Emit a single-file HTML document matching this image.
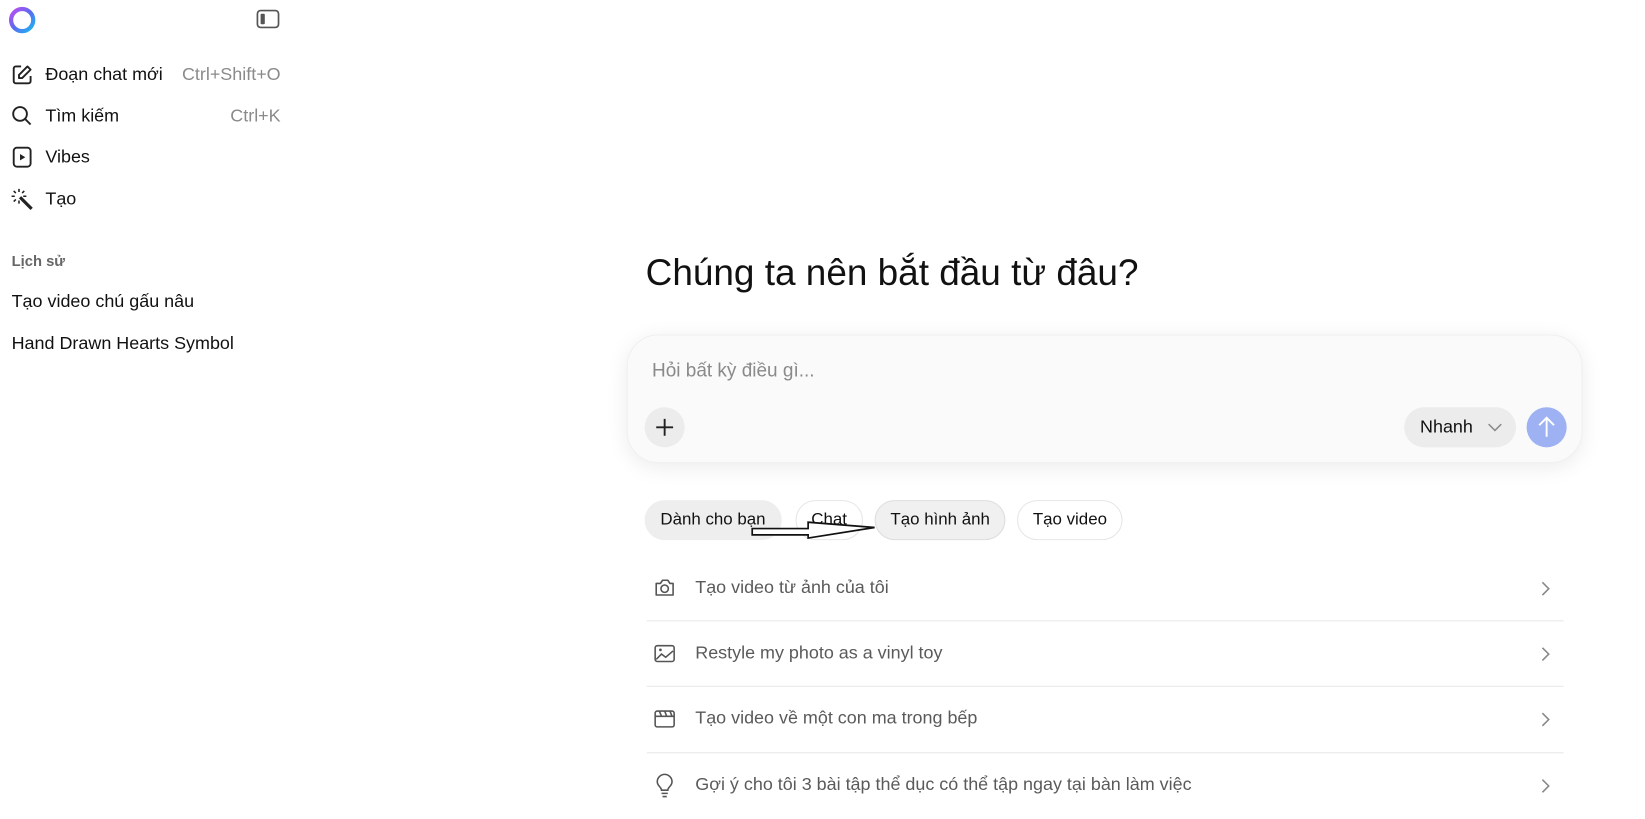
<!DOCTYPE html>
<html><head><meta charset="utf-8"><style>
*{margin:0;padding:0;box-sizing:border-box}
body{width:1645px;height:807px;background:#fff;font-family:"Liberation Sans",sans-serif;color:#111;position:relative;overflow:hidden}
#w{position:absolute;left:0;top:0;width:1560px;height:765px;transform:scale(1.055);transform-origin:0 0}
#m{position:absolute;left:-4px;top:-3px;width:1560px;height:770px}
.a{position:absolute}
.nav{font-size:17px;display:flex;align-items:center}
.gray{color:#8a8a8a}
.chip{position:absolute;top:477px;height:38px;border-radius:19px;font-size:16px;line-height:36px;padding:0 14px;border:1px solid #e6e6e6}
.row{position:absolute;left:617px;width:869px;height:62px;border-bottom:1px solid #e8e8e8;font-size:17px;color:#5a5a5a}
.row span{position:absolute;left:46px;top:20px}
.row svg.i{position:absolute;left:6px;top:19px}
.row .ch{position:absolute;right:12px;top:23px}
</style></head><body><div id="w">
<svg class="a" style="left:7px;top:5px" width="28" height="28"><defs><linearGradient id="g" x1="0" y1="0" x2="1" y2="1"><stop offset="0" stop-color="#c04cf0"/><stop offset="0.5" stop-color="#5a6cf0"/><stop offset="1" stop-color="#19b8f0"/></linearGradient></defs><circle cx="14" cy="14" r="10.5" fill="none" stroke="url(#g)" stroke-width="4"/></svg>
<svg class="a" style="left:243px;top:9px" width="22" height="18"><rect x="1" y="1" width="20" height="16" rx="3" fill="none" stroke="#555" stroke-width="1.6"/><rect x="4" y="4" width="4" height="10" rx="1" fill="#555"/></svg>

<div class="a nav" style="left:10px;top:60px;width:256px"><svg width="22" height="22"><path d="M10 3H5a2 2 0 0 0-2 2v12a2 2 0 0 0 2 2h12a2 2 0 0 0 2-2v-5M16 3l3 3-8 8H8v-3z" fill="none" stroke="#222" stroke-width="1.8" stroke-linejoin="round"/></svg><span style="margin-left:11px">Đoạn chat mới</span><span class="gray" style="margin-left:auto">Ctrl+Shift+O</span></div>
<div class="a nav" style="left:10px;top:99px;width:256px"><svg width="22" height="22"><circle cx="9" cy="9" r="6.5" fill="none" stroke="#222" stroke-width="1.8"/><path d="M14 14l5 5" stroke="#222" stroke-width="1.8"/></svg><span style="margin-left:11px">Tìm kiếm</span><span class="gray" style="margin-left:auto">Ctrl+K</span></div>
<div class="a nav" style="left:10px;top:138px"><svg width="22" height="22"><rect x="3" y="2" width="16" height="18" rx="3" fill="none" stroke="#222" stroke-width="1.8"/><path d="M9 8v6l5-3z" fill="#222"/></svg><span style="margin-left:11px">Vibes</span></div>
<div class="a nav" style="left:10px;top:178px"><svg width="22" height="22"><path d="M9 9l11 11" stroke="#222" stroke-width="3"/><path d="M8 1v3M8 12v3M1 8h3M12 8h3M3 3l2 2M13 3l-2 2M3 13l2-2" stroke="#222" stroke-width="1.5"/></svg><span style="margin-left:11px">Tạo</span></div>

<div class="a" style="left:11px;top:239px;font-size:14px;color:#666;font-weight:bold">Lịch sử</div>
<div class="a" style="left:11px;top:276px;font-size:17px">Tạo video chú gấu nâu</div>
<div class="a" style="left:11px;top:316px;font-size:17px">Hand Drawn Hearts Symbol</div>

<div id="m">
<div class="a" style="left:616px;top:242px;font-size:35px;color:#111">Chúng ta nên bắt đầu từ đâu?</div>

<div class="a" style="left:598px;top:320px;width:906px;height:122px;border-radius:30px;background:#fafafa;box-shadow:0 4px 20px rgba(0,0,0,0.08);border:1px solid #f0f0f0">
<div class="a" style="left:23px;top:23px;font-size:18px;color:#8a8a8a">Hỏi bất kỳ điều gì...</div>
<div class="a" style="left:16px;top:68px;width:38px;height:38px;border-radius:50%;background:#ececec"><svg width="38" height="38"><path d="M19 11v16M11 19h16" stroke="#222" stroke-width="1.8"/></svg></div>
<div class="a" style="left:736px;top:68px;width:106px;height:38px;border-radius:19px;background:#ececec;font-size:17px;line-height:38px;padding-left:15px">Nhanh<svg style="position:absolute;left:78px;top:14px" width="16" height="10"><path d="M2 2l6 6 6-6" fill="none" stroke="#888" stroke-width="1.4"/></svg></div>
<div class="a" style="left:852px;top:68px;width:38px;height:38px;border-radius:50%;background:#9db1f3"><svg width="38" height="38"><path d="M19 28V11M12 17l7-7 7 7" fill="none" stroke="#fff" stroke-width="1.8"/></svg></div>
</div>

<div class="chip" style="left:615px;background:#eeeeee;border-color:#eee">Dành cho bạn</div>
<div class="chip" style="left:758px;background:#fff">Chat</div>
<div class="chip" style="left:833px;background:#f0f0f0;border-color:#ddd">Tạo hình ảnh</div>
<div class="chip" style="left:968px;background:#fff">Tạo video</div>
<svg class="a" style="left:0;top:0" width="1560" height="765"><path d="M717 504H770V498L833 503L770 513V510H717Z" fill="#fff" stroke="#111" stroke-width="1.6"/></svg>

<div class="row" style="top:530px"><svg class="i" width="22" height="22"><path d="M3 7h4l2-3h5l2 3h3v11H3z" fill="none" stroke="#555" stroke-width="1.5" stroke-linejoin="round"/><circle cx="11" cy="12" r="3.5" fill="none" stroke="#555" stroke-width="1.5"/></svg><span>Tạo video từ ảnh của tôi</span><svg class="ch" width="10" height="16"><path d="M2 2l6 6-6 6" fill="none" stroke="#888" stroke-width="1.5"/></svg></div>
<div class="row" style="top:592px"><svg class="i" width="22" height="22"><rect x="2" y="4" width="18" height="15" rx="2" fill="none" stroke="#555" stroke-width="1.5"/><path d="M3 17l5-5 4 3 7-6" fill="none" stroke="#555" stroke-width="1.5"/><circle cx="7" cy="8" r="1.3" fill="#555"/></svg><span>Restyle my photo as a vinyl toy</span><svg class="ch" width="10" height="16"><path d="M2 2l6 6-6 6" fill="none" stroke="#888" stroke-width="1.5"/></svg></div>
<div class="row" style="top:654px;height:63px"><svg class="i" width="22" height="22"><rect x="2" y="4" width="18" height="15" rx="2" fill="none" stroke="#555" stroke-width="1.5"/><path d="M2 9h18M6 4l2 5M11 4l2 5M16 4l2 5" stroke="#555" stroke-width="1.5"/></svg><span>Tạo video về một con ma trong bếp</span><svg class="ch" width="10" height="16"><path d="M2 2l6 6-6 6" fill="none" stroke="#888" stroke-width="1.5"/></svg></div>
<div class="row" style="top:717px;border:none"><svg class="i" width="22" height="24"><path d="M8 16c0-3-4-4-4-8a7 7 0 0 1 14 0c0 4-4 5-4 8zM8 19h6M9 22h4" fill="none" stroke="#555" stroke-width="1.5"/></svg><span>Gợi ý cho tôi 3 bài tập thể dục có thể tập ngay tại bàn làm việc</span><svg class="ch" width="10" height="16"><path d="M2 2l6 6-6 6" fill="none" stroke="#888" stroke-width="1.5"/></svg></div>
</div>
</div></body></html>
